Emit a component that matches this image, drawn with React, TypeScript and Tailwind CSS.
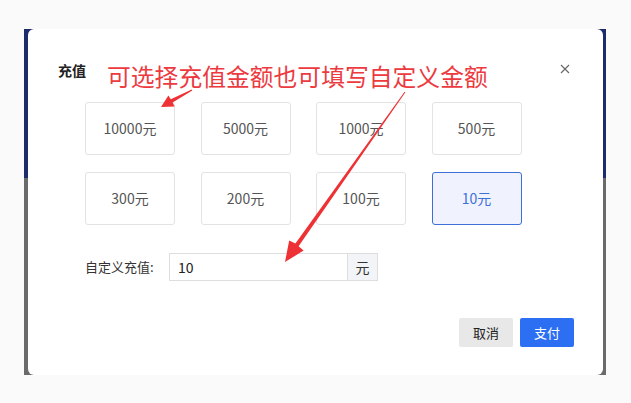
import { useState } from 'react';

const amounts = [10000, 5000, 1000, 500, 300, 200, 100, 10];

function CloseIcon() {
  return (
    <svg width="10" height="10" viewBox="0 0 10 10" className="text-[#666]">
      <path d="M1 1L9 9M9 1L1 9" stroke="currentColor" strokeWidth="1.1" fill="none" />
    </svg>
  );
}

function Annotations() {
  return (
    <div className="pointer-events-none absolute inset-0">
      <div className="absolute left-[107px] top-[64px] whitespace-nowrap text-[23.8px] leading-none text-[#ec3a3f]">
        可选择充值金额也可填写自定义金额
      </div>
      <svg width="631" height="403" className="absolute left-0 top-0">
        {/* short arrow to the preset amounts */}
        <polygon
          fill="#ee3134"
          points="192.3,90.4 191.7,89.6 170.8,99.2 168.4,95.6 161,107 174.6,106.6 172.6,102.6"
        />
        {/* long arrow to the custom input */}
        <polygon
          fill="#ee3134"
          points="405.4,92.3 404.6,91.7 295.4,243.6 289.2,240.6 285,262 303.6,250.6 298.6,246.2"
        />
      </svg>
    </div>
  );
}

export default function App() {
  const [selected, setSelected] = useState(10);
  const [custom, setCustom] = useState('10');

  return (
    <div className="relative h-[403px] w-[631px] overflow-hidden bg-[#fafafa] pl-[24px] pt-[29px] font-['Noto_Sans_CJK_SC','Noto_Sans',sans-serif]">
      <div className="flex h-[346px] w-[582px] bg-[linear-gradient(to_bottom,#1d2a6c_149px,#6a6a6a_149px)] pl-[4px] pr-[3px]">
        <div className="flex h-full flex-1 flex-col rounded-[6px] bg-white pl-[30px] pr-[29px] pt-[31px]">
          <div className="flex h-[20px] items-center justify-between">
            <span className="text-[14px] font-bold leading-[20px] text-[#222]">充值</span>
            <button className="mr-[4px] mt-[-2px] flex items-center">
              <CloseIcon />
            </button>
          </div>

          <div className="ml-[27px] mt-[22px] grid grid-cols-[repeat(4,90px)] gap-x-[25.5px] gap-y-[17px]">
            {amounts.map((a) => {
              const on = a === selected;
              return (
                <button
                  key={a}
                  onClick={() => {
                    setSelected(a);
                    setCustom(String(a));
                  }}
                  className={`flex h-[53px] items-center justify-center rounded-[3px] border text-[14px] ${
                    on
                      ? 'border-[#3d6fd8] bg-[#f0f3fe] text-[#3d6fd8]'
                      : 'border-[#e3e3e3] bg-white text-[#555]'
                  }`}
                >
                  {a}元
                </button>
              );
            })}
          </div>

          <div className="ml-[27px] mt-[28px] flex h-[28px] items-center">
            <span className="w-[84px] text-[13px] text-[#333]">自定义充值:</span>
            <input
              value={custom}
              onChange={(e) => setCustom(e.target.value)}
              className="h-[28px] w-[179px] border border-[#dedede] px-[8px] text-[14px] text-[#222] outline-none"
            />
            <span className="flex h-[28px] w-[30px] items-center justify-center border border-l-0 border-[#dedede] bg-[#f2f4f7] text-[14px] text-[#333]">
              元
            </span>
          </div>

          <div className="mt-[37px] flex justify-end gap-[7px]">
            <button className="h-[29px] w-[54px] rounded-[2px] bg-[#e8e8e8] text-[13px] text-[#222]">取消</button>
            <button className="h-[29px] w-[54px] rounded-[2px] bg-[#2c6ff3] text-[13px] text-white">支付</button>
          </div>
        </div>
      </div>
      <Annotations />
    </div>
  );
}
